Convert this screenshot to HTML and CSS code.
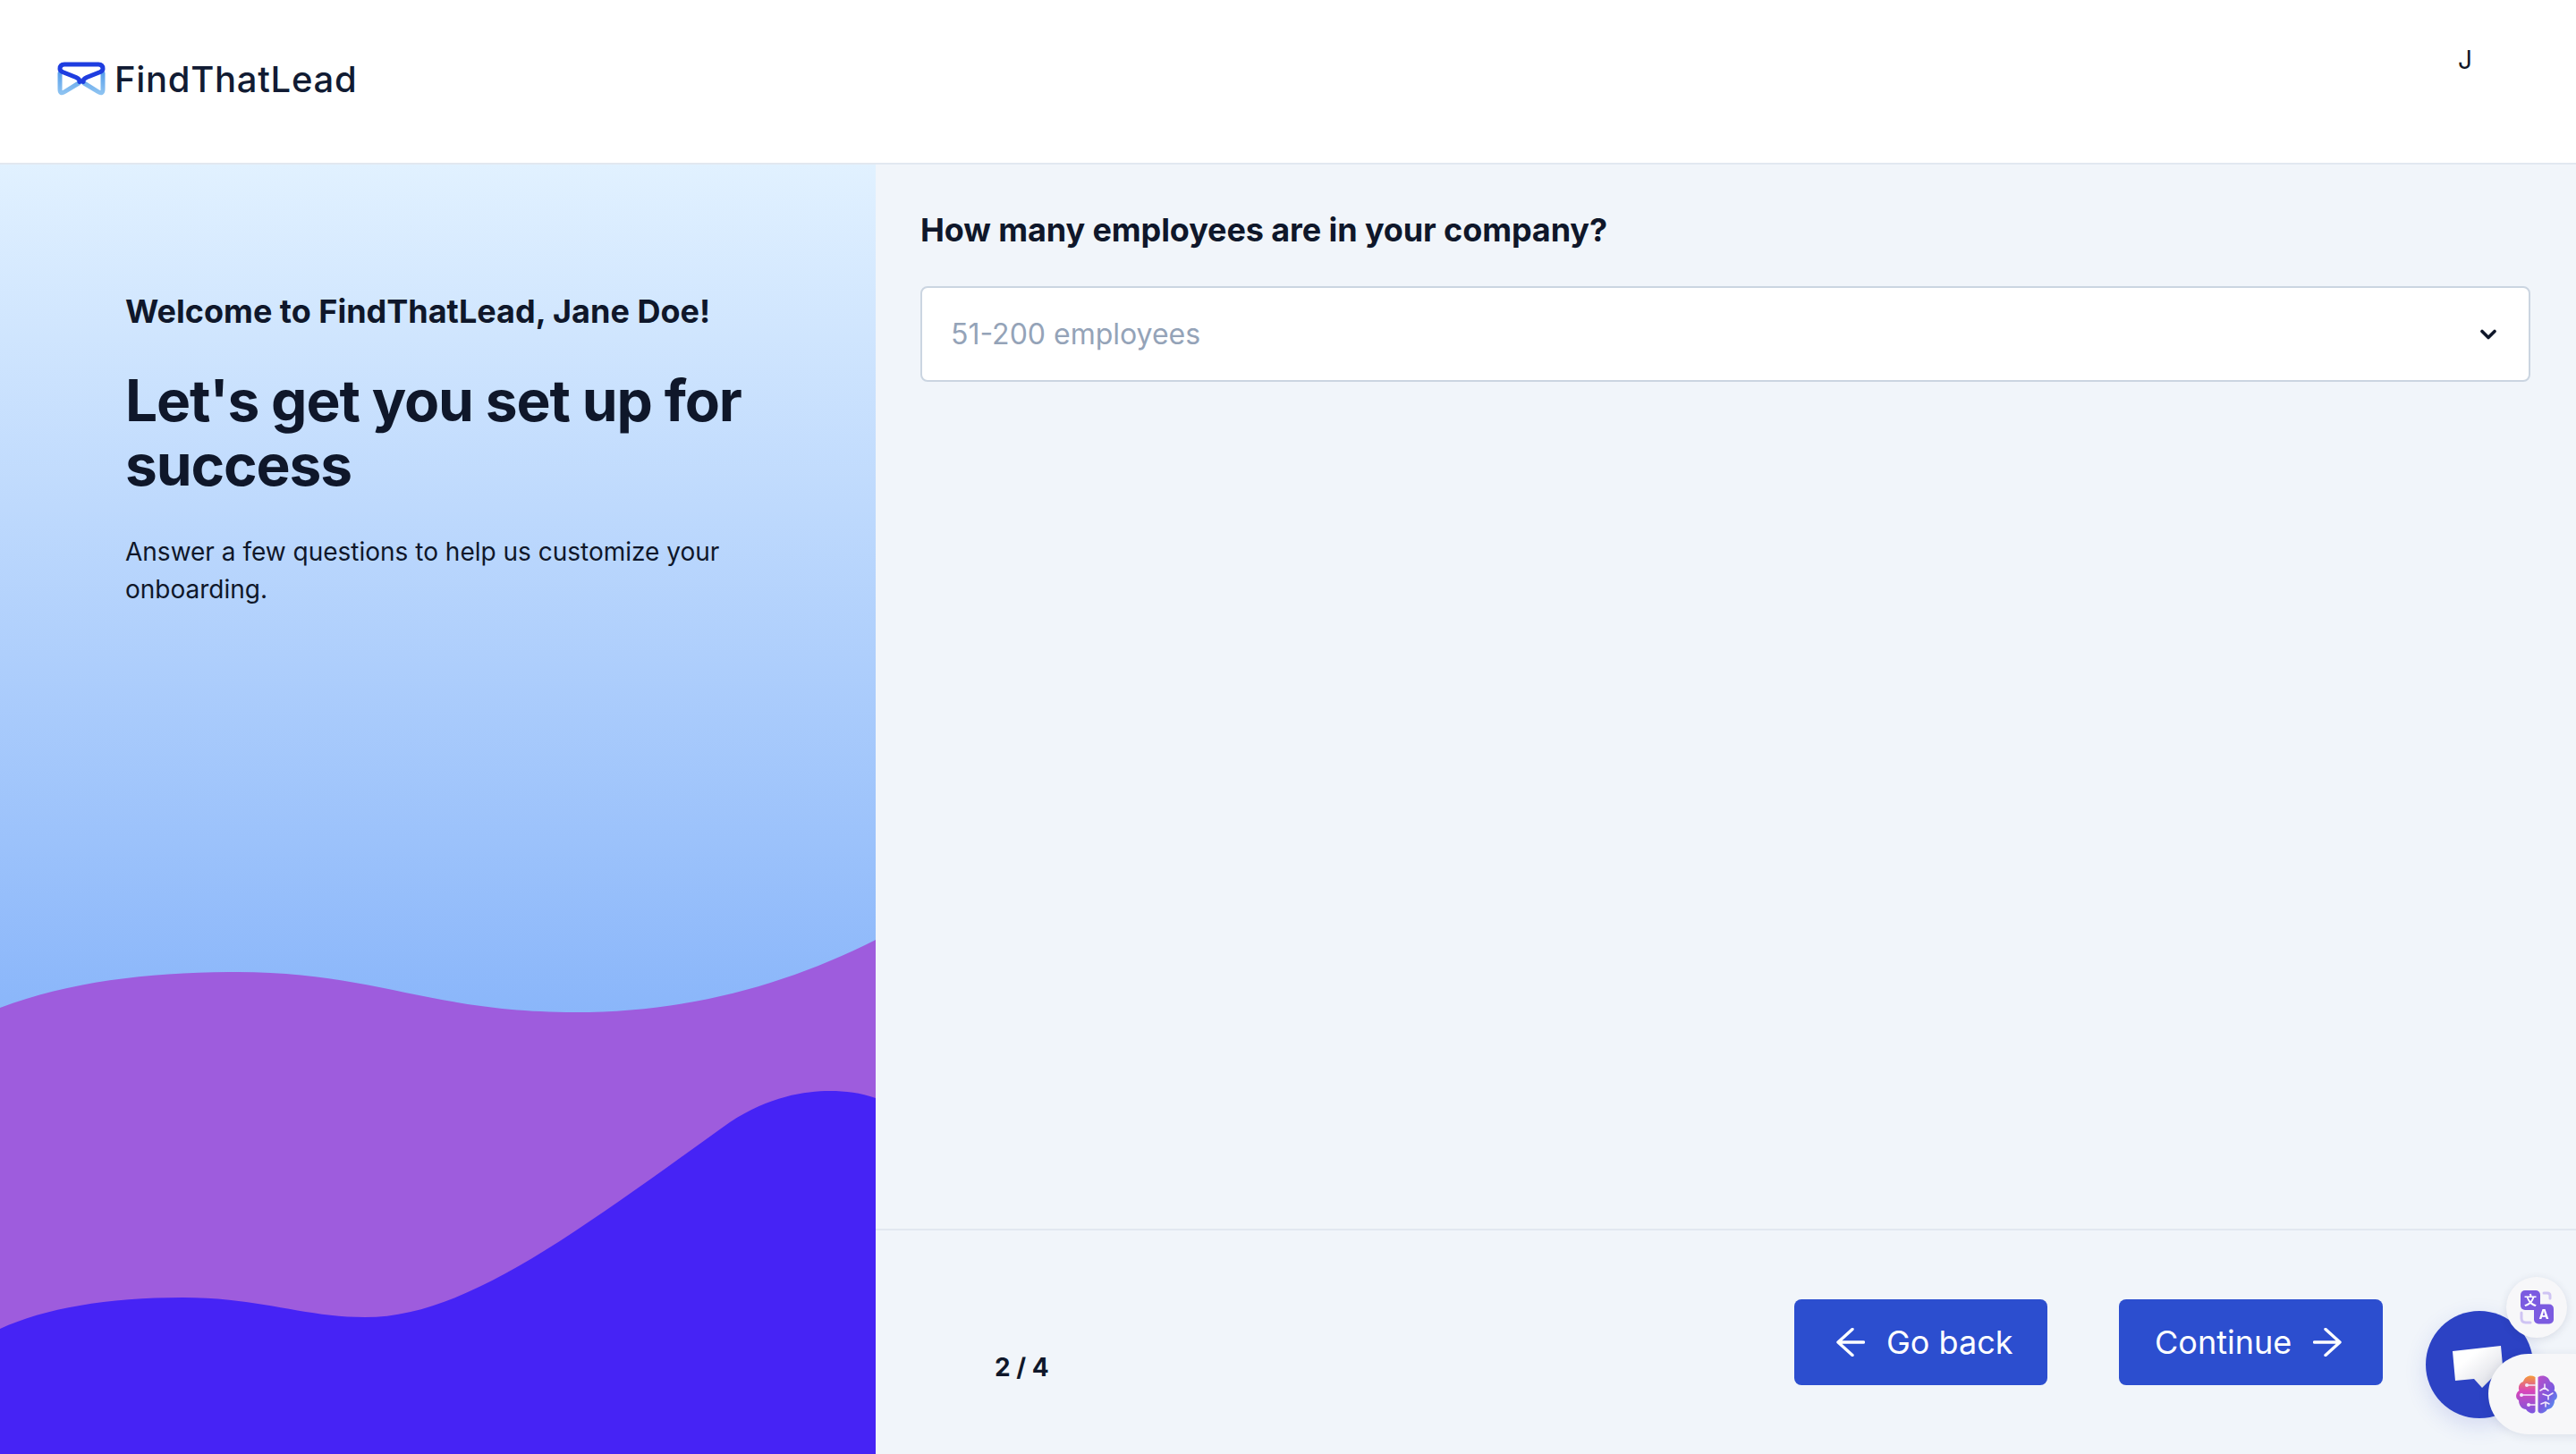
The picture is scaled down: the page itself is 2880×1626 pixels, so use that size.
FILE: index.html
```html
<!DOCTYPE html>
<html lang="en">
<head>
<meta charset="utf-8">
<title>FindThatLead</title>
<link rel="stylesheet" href="styles.css">
</head>
<body>
<div class="page">
  <header class="topbar">
    <div class="brand">
      <svg class="brand-mark" viewBox="0 0 54 38" aria-hidden="true">
        <defs>
          <linearGradient id="lg" x1="0" y1="0" x2="0" y2="1"><stop offset="0" stop-color="#5aa0ea"/><stop offset="1" stop-color="#8cc2f1"/></linearGradient>
        </defs>
        <path d="M3 13V31Q3 37 8.500 33.500L24 24M51 13V31Q51 37 45.500 33.500L30 24" fill="none" stroke="url(#lg)" stroke-width="5" stroke-linecap="round"/>
        <path d="M27 3H8Q3 3 3 8Q3 10 6 11.500L21 17.500Q25.500 19.500 25 22.500M27 3H46Q51 3 51 8Q51 10 48 11.500L33 17.500Q28.500 19.500 29 22.500" fill="none" stroke="#1e3de0" stroke-width="5" stroke-linecap="round"/>
      </svg>
      <span class="brand-name">FindThatLead</span>
    </div>
    <div class="avatar">J</div>
  </header>
  <div class="content">
    <aside class="intro">
      <div class="intro-text">
        <h2 class="welcome">Welcome to FindThatLead, Jane Doe!</h2>
        <h1 class="headline">Let's get you set up for success</h1>
        <p class="lede">Answer a few questions to help us customize your onboarding.</p>
      </div>
      <svg class="waves" viewBox="0 0 979 575" preserveAspectRatio="none" aria-hidden="true">
        <path fill="#9e5cdd" d="M0 76C80 46 170 36 265 36C420 36 480 81 643 81C770 81 880 50 979 0V575H0Z"/>
        <path fill="#4623f5" d="M0 435C50 412 120 400 204 400C290 400 340 422 408 422C520 422 640 330 816 204C860 175 900 169 928 169C945 169 962 171 979 177V575H0Z"/>
      </svg>
    </aside>
    <main class="panel">
      <section class="question">
        <h3 class="question-title">How many employees are in your company?</h3>
        <div class="select">
          <span class="select-value">51-200 employees</span>
          <svg class="chevron" viewBox="0 0 18 12" aria-hidden="true"><path d="M2 2.500L9 9.500L16 2.500" fill="none" stroke="#0f172a" stroke-width="3.600" stroke-linecap="round" stroke-linejoin="round"/></svg>
        </div>
      </section>
      <footer class="actions">
        <span class="progress">2 / 4</span>
        <div class="buttons">
          <button class="btn btn-back" type="button">
            <svg class="arrow" viewBox="0 0 32 32" aria-hidden="true"><path d="M30.500 16H3M18 1.500L2 16L18 30.500" fill="none" stroke="#fff" stroke-width="3.400" stroke-linecap="round" stroke-linejoin="round"/></svg>
            <span>Go back</span>
          </button>
          <button class="btn btn-next" type="button">
            <span>Continue</span>
            <svg class="arrow" viewBox="0 0 32 32" aria-hidden="true"><path d="M1.500 16H29M14 1.500L30 16L14 30.500" fill="none" stroke="#fff" stroke-width="3.400" stroke-linecap="round" stroke-linejoin="round"/></svg>
          </button>
        </div>
      </footer>
    </main>
  </div>
</div>

<div class="chat">
  <svg viewBox="0 0 120 120" aria-hidden="true">
    <defs><linearGradient id="cg" x1="0.300" y1="0.300" x2="1" y2="1"><stop offset="0" stop-color="#fff"/><stop offset="1" stop-color="#d5d7e0"/></linearGradient></defs>
    <path fill="url(#cg)" d="M30 45L84 39L87 72L75 74L63 86L54 76L33 78Z"/>
  </svg>
</div>
<div class="translate">
  <svg viewBox="0 0 38 38" aria-hidden="true">
    <rect x="1" y="0" width="22" height="22" rx="5" fill="#7b5be0"/>
    <rect x="16" y="15.500" width="22" height="22" rx="5" fill="#7b5be0"/>
    <path d="M27 3H31Q34 3 34 6V9M2 25V31Q2 36 7 36H12" fill="none" stroke="#cfc4f3" stroke-width="3" stroke-linecap="round"/>
    <text class="tr-zh" x="12" y="16">文</text>
    <text class="tr-en" x="27" y="32">A</text>
  </svg>
</div>
<div class="assist">
  <svg viewBox="0 0 48 44" aria-hidden="true">
    <defs>
      <linearGradient id="bl" x1="0.500" y1="0" x2="0.500" y2="1"><stop offset="0" stop-color="#f59a3a"/><stop offset="0.400" stop-color="#d946b8"/><stop offset="1" stop-color="#7a55e0"/></linearGradient>
      <linearGradient id="br" x1="0.100" y1="0" x2="0.900" y2="1"><stop offset="0" stop-color="#b94fc9"/><stop offset="0.550" stop-color="#7a5ae0"/><stop offset="1" stop-color="#49a0f5"/></linearGradient>
    </defs>
    <path fill="url(#bl)" d="M22.500 2C17 -1 11 1 9 7C4 9 3 14 4.500 17C0 20 0 26 4 28C4 34 8 38 12 38C15 43 22 44 22.500 40Z"/>
    <path fill="url(#br)" d="M25.500 2C31 -1 37 1 39 7C44 9 45 14 43.500 17C48 20 48 26 44 28C44 34 40 38 36 38C33 43 26 44 25.500 40Z"/>
    <path d="M22.500 11H13M22.500 22H7M22.500 33H15M33 10V14L28 17M33 14L37 17M42 20L37 23V27M37 23L31 21M29 32L34 30L38 32M34 30V35" fill="none" stroke="#f3e8fb" stroke-width="1.600" stroke-linecap="round" stroke-linejoin="round"/>
    <circle cx="13" cy="11" r="2" fill="#f3e8fb"/><circle cx="7" cy="22" r="2" fill="#f3e8fb"/><circle cx="15" cy="33" r="2" fill="#f3e8fb"/>
  </svg>
</div>
</body>
</html>
```
FILE: styles.css
```css
* { box-sizing: border-box; }
html, body { margin: 0; height: 100%; }
body { font-family: "Inter", "Liberation Sans", sans-serif; color: #0f172a; background: #f1f5fa; overflow: hidden; }
.page { display: flex; flex-direction: column; height: 1626px; }
.topbar { flex: none; height: 184px; background: #fff; border-bottom: 2px solid #e2e8f0; display: flex; justify-content: space-between; align-items: flex-start; padding: 69px 0 0 64px; }
.brand { display: flex; align-items: center; gap: 10px; height: 38px; }
.brand-mark { width: 54px; height: 38px; display: block; }
.brand-name { font-size: 40px; font-weight: 500; letter-spacing: 0.7px; line-height: 40px; padding-top: 1px; color: #111b33; }
.avatar { font-size: 28px; line-height: 34px; margin: -19px 116px 0 0; color: #111827; }
.content { flex: 1; display: flex; min-height: 0; }
.intro { flex: none; width: 979px; position: relative; overflow: hidden; padding: 142px 140px 0; background: linear-gradient(#e1f1ff 0, #8ab6fa 948px); }
.intro-text { position: relative; }
.welcome { margin: 0 0 42px; font-size: 36px; line-height: 44px; font-weight: 700; letter-spacing: 0; }
.headline { margin: 0 0 40px; font-size: 64px; line-height: 72px; font-weight: 700; letter-spacing: -1.14px; }
.lede { margin: 0; font-size: 28px; line-height: 42px; font-weight: 400; }
.waves { position: absolute; left: 0; bottom: 0; width: 979px; height: 575px; display: block; }
.panel { flex: 1; display: flex; flex-direction: column; min-width: 0; }
.question { flex: 1; padding: 51px 51px 0 50px; }
.question-title { margin: 0 0 41px; font-size: 36px; line-height: 44px; font-weight: 700; letter-spacing: -0.1px; }
.select { height: 107px; background: #fff; border: 2px solid #cbd5e1; border-radius: 8px; display: flex; align-items: center; justify-content: space-between; padding: 0 36px 0 32px; }
.select-value { font-size: 32px; line-height: 40px; color: #94a3b8; }
.chevron { width: 18px; height: 12px; display: block; }
.actions { flex: none; height: 252px; border-top: 2px solid #e2e8f0; display: flex; justify-content: space-between; align-items: flex-start; padding: 77px 216px 0 133px; }
.progress { font-size: 28px; line-height: 36px; font-weight: 700; margin-top: 58px; }
.buttons { display: flex; gap: 80px; }
.btn { height: 96px; border: 0; border-radius: 8px; background: #2c4ecf; color: #fff; font: 400 36px/48px "Inter", sans-serif; display: flex; align-items: center; gap: 24px; }
.btn-back { width: 283px; padding: 0 0 0 47px; }
.btn-next { width: 295px; padding: 0 0 0 40px; }
.arrow { width: 32px; height: 32px; display: block; flex: none; }
.chat { position: fixed; left: 2712px; top: 1466px; width: 120px; height: 120px; border-radius: 50%; background: #2c42c4; box-shadow: 0 8px 24px rgba(44,66,196,0.15); }
.chat svg { display: block; width: 120px; height: 120px; }
.translate { position: fixed; left: 2802px; top: 1428px; width: 68px; height: 68px; border-radius: 50%; background: #f7f7f9; box-shadow: 0 2px 10px rgba(30,40,80,0.12); display: flex; align-items: center; justify-content: center; }
.translate svg { width: 38px; height: 38px; display: block; }
.tr-zh { font: 700 14px "Noto Sans CJK SC", sans-serif; fill: #fff; text-anchor: middle; }
.tr-en { font: 700 15px "Inter", sans-serif; fill: #fff; text-anchor: middle; }
.assist { position: fixed; left: 2782px; top: 1514px; width: 140px; height: 90px; border-radius: 45px; background: #f7f7f9; box-shadow: 0 2px 12px rgba(30,40,80,0.1); padding: 24px 0 0 30px; }
.assist svg { width: 48px; height: 44px; display: block; }
```
